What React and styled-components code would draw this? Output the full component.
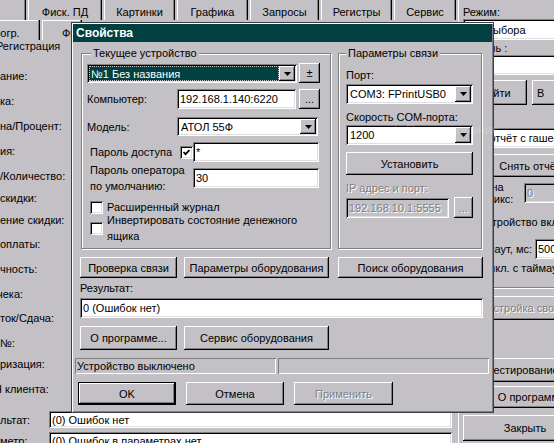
import React from "react";
import styled, { createGlobalStyle, css } from "styled-components";

const FACE = "#c3c1c6";
const TEAL = "#004040";

const GlobalStyle = createGlobalStyle`
  html, body { margin: 0; padding: 0; background: ${FACE}; }
  body {
    font-family: "Liberation Sans", Arial, sans-serif;
    font-size: 11px;
    color: #000;
  }
`;

const raised = css`
  box-shadow: inset -1px -1px 0 #000, inset 1px 1px 0 #fff, inset -2px -2px 0 #808080;
`;

const sunken = css`
  box-shadow: inset 1px 1px 0 #808080, inset -1px -1px 0 #fff, inset 2px 2px 0 #000,
    inset -2px -2px 0 #dfdfdf;
`;

const etched = css`
  color: #808080;
  text-shadow: 1px 1px 0 #fff;
`;

const Screen = styled.div`
  position: relative;
  width: 554px;
  height: 443px;
  overflow: hidden;
  background: ${FACE};
`;

/* ---------- background application ---------- */

const Desktop = styled.div`
  display: grid;
  grid-template-columns: 458px 200px;
  height: 100%;
`;

const LeftPane = styled.div`
  display: flex;
  flex-direction: column;
  overflow: hidden;
`;

const TabStrip = styled.div`
  display: flex;
  gap: 2px;
  flex: none;
  height: 20px;
  margin-left: ${(p) => p.$offset}px;
`;

const Tab = styled.div`
  flex: none;
  box-sizing: border-box;
  width: ${(p) => p.$w}px;
  height: 20px;
  display: flex;
  align-items: center;
  justify-content: ${(p) => (p.$pl ? "flex-start" : "center")};
  padding: ${(p) => p.$pt}px 0 0 ${(p) => p.$pl || 0}px;
  overflow: hidden;
  white-space: nowrap;
  box-shadow: inset 1px 0 0 #fff, inset -1px 0 0 #000, inset -2px 0 0 #808080
    ${(p) => (p.$top ? ", inset 0 1px 0 #fff" : "")};
`;

const LabelColumn = styled.div`
  display: flex;
  flex-direction: column;
  margin-top: -1px;
`;

const SideLabel = styled.div`
  flex: none;
  height: ${(p) => p.$h}px;
  line-height: 14px;
  margin-left: ${(p) => p.$shift || 0}px;
  white-space: nowrap;
`;

const ResultRow = styled.div`
  display: flex;
  align-items: center;
  flex: none;
  height: 17px;
  margin-top: ${(p) => p.$mt || 0}px;
`;

const ResultLabel = styled.div`
  flex: none;
  width: 49px;
  white-space: nowrap;
`;

const RightPane = styled.div`
  display: flex;
  flex-direction: column;
  align-items: flex-start;
  box-shadow: inset 1px 0 0 #fff;
  padding-left: 5px;
`;

const Separator = styled.div`
  flex: none;
  width: ${(p) => p.$w}px;
  height: 0;
  border-top: 1px solid #808080;
  border-bottom: 1px solid #fff;
  margin-top: ${(p) => p.$mt || 0}px;
`;

/* ---------- shared controls ---------- */

const Row = styled.div`
  display: flex;
  flex: none;
  align-items: ${(p) => p.$align || "center"};
  gap: ${(p) => p.$gap || 0}px;
  margin-top: ${(p) => p.$mt || 0}px;
  padding-left: ${(p) => p.$pl || 0}px;
`;

const Label = styled.div`
  flex: none;
  box-sizing: border-box;
  width: ${(p) => (p.$w ? `${p.$w}px` : "auto")};
  line-height: ${(p) => p.$lh || 14}px;
  margin-top: ${(p) => p.$mt || 0}px;
  padding-left: ${(p) => p.$pl || 0}px;
  padding-right: ${(p) => p.$pr || 0}px;
  text-align: ${(p) => p.$textAlign || "left"};
  white-space: nowrap;
  ${(p) => p.$disabled && etched}
`;

const Field = styled.div`
  flex: none;
  box-sizing: border-box;
  width: ${(p) => p.$w}px;
  height: ${(p) => p.$h || 20}px;
  margin-top: ${(p) => p.$mt || 0}px;
  padding: 0 3px 0 ${(p) => p.$pl || 3}px;
  display: flex;
  align-items: center;
  overflow: hidden;
  white-space: nowrap;
  background: ${(p) => (p.$disabled ? FACE : "#fff")};
  ${sunken}
  ${(p) => p.$disabled && etched}
`;

const Button = styled.div`
  flex: none;
  box-sizing: border-box;
  width: ${(p) => p.$w}px;
  height: ${(p) => p.$h || 23}px;
  margin-top: ${(p) => p.$mt || 0}px;
  margin-left: ${(p) => p.$ml || 0}px;
  padding-left: ${(p) => p.$pl || 0}px;
  display: flex;
  align-items: center;
  justify-content: ${(p) => (p.$pl ? "flex-start" : "center")};
  overflow: hidden;
  white-space: nowrap;
  background: ${FACE};
  ${raised}
  ${(p) => p.$default && css`border: 1px solid #000;`}
  ${(p) => p.$disabled && etched}
`;

const ComboFrame = styled.div`
  flex: none;
  box-sizing: border-box;
  width: ${(p) => p.$w}px;
  height: ${(p) => p.$h || 20}px;
  margin-top: ${(p) => p.$mt || 0}px;
  padding: 2px;
  display: flex;
  background: #fff;
  ${sunken}
`;

const ComboValue = styled.div`
  flex: 1;
  display: flex;
  align-items: center;
  padding-left: 2px;
  white-space: nowrap;
  overflow: hidden;
  ${(p) =>
    p.$selected &&
    css`
      background: ${TEAL};
      color: #fff;
      outline: 1px dotted #c8c8c8;
      outline-offset: -1px;
    `}
`;

const DropButton = styled.div`
  flex: none;
  width: 16px;
  display: flex;
  align-items: center;
  justify-content: center;
  background: ${FACE};
  ${raised}
`;

const CheckBox = styled.div`
  flex: none;
  box-sizing: border-box;
  width: 13px;
  height: 13px;
  background: #fff;
  display: flex;
  align-items: center;
  justify-content: center;
  ${sunken}
`;

function ComboBox({ w, h, mt, value, selected }) {
  return (
    <ComboFrame $w={w} $h={h} $mt={mt}>
      <ComboValue $selected={selected}>{value}</ComboValue>
      <DropButton>
        <svg width="7" height="4" viewBox="0 0 7 4">
          <polygon points="0,0 7,0 3.5,4" fill="#000" />
        </svg>
      </DropButton>
    </ComboFrame>
  );
}

function Check({ checked }) {
  return (
    <CheckBox>
      {checked && (
        <svg width="7" height="7" viewBox="0 0 7 7">
          <polyline points="0.5,3 2.6,5.2 6.5,1" fill="none" stroke="#000" strokeWidth="1.8" />
        </svg>
      )}
    </CheckBox>
  );
}

/* ---------- dialog ---------- */

const Dialog = styled.div`
  position: absolute;
  left: 71px;
  top: 22px;
  width: 423px;
  height: 391px;
  box-sizing: border-box;
  padding: 2px;
  background: ${FACE};
  box-shadow: inset 0 0 0 1px #404040, inset 2px 2px 0 #fff, inset -2px -2px 0 #808080;
  display: flex;
  flex-direction: column;
`;

const TitleBar = styled.div`
  flex: none;
  height: 18px;
  line-height: 18px;
  padding-left: 3px;
  background: ${TEAL};
  color: #fff;
  font-weight: bold;
  font-size: 12px;
`;

const Body = styled.div`
  display: flex;
  flex-direction: column;
  align-items: flex-start;
  padding: 0 7px;
`;

const GroupRow = styled.div`
  display: flex;
  gap: 7px;
  margin: 11px 0 0 1px;
`;

const GroupBox = styled.div`
  position: relative;
  flex: none;
  box-sizing: border-box;
  width: ${(p) => p.$w}px;
  height: 196px;
  padding: ${(p) => p.$pad};
  border: 1px solid #808080;
  box-shadow: inset 1px 1px 0 #fff, 1px 1px 0 #fff;
  display: flex;
  flex-direction: column;
  align-items: flex-start;
`;

const GroupTitle = styled.span`
  position: absolute;
  top: -8px;
  left: ${(p) => p.$left}px;
  padding: 0 2px;
  line-height: 14px;
  background: ${FACE};
`;

const StatusBar = styled.div`
  display: flex;
  gap: 2px;
  margin-top: 8px;
  padding: 0 2px;
`;

const StatusPanel = styled.div`
  flex: none;
  box-sizing: border-box;
  width: ${(p) => p.$w}px;
  height: 16px;
  line-height: 16px;
  padding-left: 2px;
  white-space: nowrap;
  box-shadow: inset 1px 1px 0 #808080, inset -1px -1px 0 #fff;
`;

const Footer = styled.div`
  display: flex;
  gap: 10px;
  margin-top: 8px;
  padding-left: 5px;
`;

const GhostTip = styled.div`
  position: absolute;
  left: 381px;
  top: 122px;
  display: flex;
  align-items: center;
  height: 14px;
  color: rgba(255, 255, 255, 0.22);
  pointer-events: none;
  font-size: 13px;
`;

const GhostDot = styled.span`
  width: 4px;
  height: 4px;
  border-radius: 50%;
  background: rgba(255, 255, 255, 0.25);
  margin-right: 10px;
`;

const GhostBar = styled.span`
  width: 1px;
  height: 14px;
  background: rgba(255, 255, 255, 0.18);
  margin-right: 10px;
`;

const TOP_TABS = [
  ["", 46],
  ["Фиск. ПД", 74],
  ["Картинки", 71],
  ["Графика", 71],
  ["Запросы", 69],
  ["Регистры", 71],
  ["Сервис", 62],
];

const SIDE_LABELS = [
  ["Регистрация", 46, -4],
  ["ание:", 76, 0],
  ["ка:", 101, 0],
  ["на/Процент:", 126, 0],
  ["ия:", 151, 0],
  ["/Количество:", 176, 0],
  ["скидки:", 198, 0],
  ["ение скидки:", 220, 0],
  ["оплаты:", 244, 0],
  ["чность:", 269, 0],
  ["чека:", 294, -3],
  ["ток/Сдача:", 318, 0],
  ["№:", 343, 0],
  ["ризация:", 364, 0],
  ["Н клиента:", 389, -6],
];

export default function App() {
  return (
    <>
      <GlobalStyle />
      <Screen>
        <Desktop>
          <LeftPane>
            <TabStrip $offset={-20}>
              {TOP_TABS.map(([t, w], i) => (
                <Tab key={i} $w={w} $pt={4}>
                  {t}
                </Tab>
              ))}
            </TabStrip>
            <TabStrip $offset={-34}>
              <Tab $w={74} $pt={6} $top>
                Прогр.
              </Tab>
              <Tab $w={40} $pt={6} $pl={20} $top>
                Фиск.
              </Tab>
            </TabStrip>
            <LabelColumn>
              {SIDE_LABELS.map(([t, y, shift], i) => {
                const next = SIDE_LABELS[i + 1];
                return (
                  <SideLabel key={t} $h={next ? next[1] - y : 29} $shift={shift}>
                    {t}
                  </SideLabel>
                );
              })}
            </LabelColumn>
            <ResultRow>
              <ResultLabel>льтат:</ResultLabel>
              <Field $w={403} $h={17}>
                (0) Ошибок нет
              </Field>
            </ResultRow>
            <ResultRow $mt={4}>
              <ResultLabel>метр:</ResultLabel>
              <Field $w={403} $h={17}>
                (0) Ошибок в параметрах нет
              </Field>
            </ResultRow>
          </LeftPane>

          <RightPane>
            <Label $mt={5}>Режим:</Label>
            <Field $w={140} $h={21}>
              Без выбора
            </Field>
            <Label $mt={1}>Пароль :</Label>
            <Field $w={140} />
            <Row $mt={5} $gap={5}>
              <Button $w={64} $h={25}>
                Найти
              </Button>
              <Button $w={60} $h={25} $pl={5}>
                В
              </Button>
            </Row>
            <Field $w={150} $mt={23} $pl={16}>
              Z-отчёт с гашением
            </Field>
            <Button $w={134} $mt={6}>
              Снять отчёт
            </Button>
            <Row $mt={4}>
              <Label $w={61} $lh={12}>
                Ширина
                <br />
                Кол. пикс:
              </Label>
              <Field $w={70} $disabled>
                0
              </Field>
            </Row>
            <Row $mt={10} $gap={4}>
              <Check />
              <Label>Устройство включено</Label>
            </Row>
            <Row $mt={10}>
              <Label $w={72} $pr={3} $textAlign="right">
                Таймаут, мс:
              </Label>
              <Field $w={60}>500</Field>
            </Row>
            <Row $mt={2} $gap={4}>
              <Check />
              <Label>Выкл. с таймаутом</Label>
            </Row>
            <Separator $w={200} $mt={12} />
            <Button $w={130} $h={24} $mt={7} $disabled>
              Настройка свойств
            </Button>
            <Button $w={120} $h={24} $mt={38}>
              Тестирование
            </Button>
            <Button $w={146} $h={22} $mt={4}>
              О программе...
            </Button>
            <Button $w={124} $h={26} $mt={7}>
              Закрыть
            </Button>
          </RightPane>
        </Desktop>

        <Dialog>
          <TitleBar>Свойства</TitleBar>
          <Body>
            <GroupRow>
              <GroupBox $w={250} $pad="9px 0 0 5px">
                <GroupTitle $left={9}>Текущее устройство</GroupTitle>
                <Row $align="flex-end" $gap={2}>
                  <ComboBox w={210} h={19} value="№1 Без названия" selected />
                  <Button $w={21} $h={20}>
                    ±
                  </Button>
                </Row>
                <Row $mt={6}>
                  <Label $w={90}>Компьютер:</Label>
                  <Field $w={119}>192.168.1.140:6220</Field>
                  <Button $w={21} $h={20} $ml={3}>
                    ...
                  </Button>
                </Row>
                <Row $mt={8}>
                  <Label $w={90}>Модель:</Label>
                  <ComboBox w={141} h={19} value="АТОЛ 55Ф" />
                </Row>
                <Row $mt={6}>
                  <Label $w={93} $pl={3}>
                    Пароль доступа
                  </Label>
                  <Check checked />
                  <Field $w={126}>*</Field>
                </Row>
                <Row>
                  <Label $w={106} $pl={3} $lh={16}>
                    Пароль оператора
                    <br />
                    по умолчанию:
                  </Label>
                  <Field $w={126}>30</Field>
                </Row>
                <Row $mt={6} $pl={3} $gap={4}>
                  <Check />
                  <Label>Расширенный журнал</Label>
                </Row>
                <Row $mt={-2} $pl={3} $gap={4}>
                  <Check />
                  <Label $lh={16}>
                    Инвертировать состояние денежного
                    <br />
                    ящика
                  </Label>
                </Row>
              </GroupBox>

              <GroupBox $w={144} $pad="14px 0 0 7px">
                <GroupTitle $left={7}>Параметры связи</GroupTitle>
                <Label>Порт:</Label>
                <ComboBox w={127} mt={2} value="COM3: FPrintUSB0" />
                <Label $mt={6}>Скорость COM-порта:</Label>
                <ComboBox w={127} mt={1} value="1200" />
                <Button $w={127} $mt={7}>
                  Установить
                </Button>
                <Label $mt={6} $disabled>
                  IP адрес и порт:
                </Label>
                <Row $mt={2} $gap={5}>
                  <Field $w={103} $disabled>
                    192.168.10.1:5555
                  </Field>
                  <Button $w={19} $h={21} $disabled>
                    ...
                  </Button>
                </Row>
              </GroupBox>
            </GroupRow>

            <Row $mt={8}>
              <Button $w={97} $h={21}>
                Проверка связи
              </Button>
              <Button $w={145} $h={21} $ml={7}>
                Параметры оборудования
              </Button>
              <Button $w={145} $h={21} $ml={9}>
                Поиск оборудования
              </Button>
            </Row>
            <Label $mt={3}>Результат:</Label>
            <Field $w={403} $mt={3}>
              0 (Ошибок нет)
            </Field>
            <Row $mt={8} $gap={7}>
              <Button $w={97} $h={24}>
                О программе...
              </Button>
              <Button $w={145} $h={24}>
                Сервис оборудования
              </Button>
            </Row>
          </Body>
          <StatusBar>
            <StatusPanel $w={201}>Устройство выключено</StatusPanel>
            <StatusPanel $w={211} />
          </StatusBar>
          <Footer>
            <Button $w={98} $default>
              OK
            </Button>
            <Button $w={98}>Отмена</Button>
            <Button $w={99} $disabled>
              Применить
            </Button>
          </Footer>
        </Dialog>

        <GhostTip>
          <GhostDot />
          <GhostBar />
          Прямоугольник
        </GhostTip>
      </Screen>
    </>
  );
}
